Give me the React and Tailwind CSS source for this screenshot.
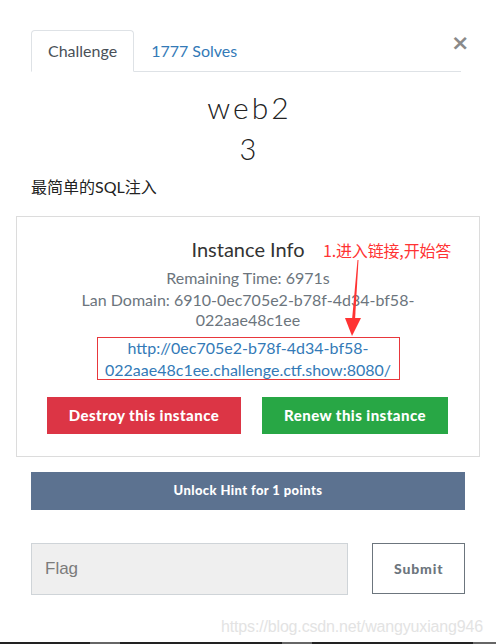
import React from "react";

export default function App() {
  const lato = { fontFamily: "Lato, 'Noto Sans CJK SC', sans-serif" };
  return (
    <div className="relative w-[496px] h-[644px] bg-white overflow-hidden flex flex-col" style={lato}>
      {/* header tabs */}
      <div className="flex items-start pt-[30px] pl-[31px] pr-[33px]">
        <div className="flex flex-1 border-b border-[#dee2e6] h-[42px]">
          <div className="h-[42px] px-[16px] flex items-center border border-[#dee2e6] border-b-white rounded-t-[4px] bg-white text-[16px] text-[#495057]">
            Challenge
          </div>
          <div className="h-[41px] px-[17px] flex items-center text-[16px] text-[#337ab7]">1777 Solves</div>
        </div>
        <div className="w-[12px] text-[22px] leading-none font-bold text-[#8a8a8a] mt-[2px] -ml-[10px]" style={{ fontFamily: "'DejaVu Sans', sans-serif" }}>
          ×
        </div>
      </div>

      {/* title */}
      <div className="flex flex-col items-center mt-[17px] text-[#222]">
        <div className="text-[30px] leading-[36px] font-light tracking-[0.1em] pl-[3px]" style={{ fontFamily: "Lato, sans-serif" }}>web2</div>
        <div className="text-[29px] leading-[36px] font-light mt-[6px]">3</div>
      </div>
      <div className="pl-[31px] mt-[9px] text-[16px] leading-[22px] text-[#222]" style={{ fontFamily: "Lato, 'Noto Sans CJK SC', sans-serif" }}>
        最简单的SQL注入
      </div>

      {/* instance box */}
      <div className="mx-[16px] mt-[18px] h-[241px] border border-[#dcdcdc] flex flex-col items-center">
        <div className="mt-[19px] text-[20px] leading-[26px] text-[#333]">Instance Info</div>
        <div className="mt-[6px] text-[16px] leading-[20px] text-[#6c757d] flex flex-col items-center">
          <span>Remaining Time: 6971s</span>
          <span className="mt-[2px]">Lan Domain: 6910-0ec705e2-b78f-4d34-bf58-</span>
          <span>022aae48c1ee</span>
        </div>
        <div className="mt-[7px] w-[303px] h-[43px] border border-[#e8373c] flex flex-col items-center justify-center text-[16px] leading-[22px] text-[#337ab7]">
          <span>http://0ec705e2-b78f-4d34-bf58-</span>
          <span>022aae48c1ee.challenge.ctf.show:8080/</span>
        </div>
        <div className="mt-[17px] flex gap-[21px] self-stretch pl-[30px]">
          <div className="w-[194px] h-[37px] bg-[#dc3545] text-white text-[15px] font-black flex items-center justify-center tracking-[0.03em]">
            Destroy this instance
          </div>
          <div className="w-[186px] h-[37px] bg-[#28a745] text-white text-[15px] font-black flex items-center justify-center tracking-[0.03em]">
            Renew this instance
          </div>
        </div>
      </div>

      {/* hint */}
      <div className="mx-[31px] mt-[15px] h-[38px] bg-[#5c7290] text-white text-[13px] font-black flex items-center justify-center tracking-[0.03em]">
        Unlock Hint for 1 points
      </div>

      {/* flag */}
      <div className="flex mx-[31px] mt-[33px] gap-[24px]">
        <div className="w-[318px] h-[52px] bg-[#efefef] border border-[#cfd4d8] flex items-center pl-[13px] text-[17px] text-[#7b7b7b]" style={{ fontFamily: "'Liberation Sans', Arial, sans-serif" }}>
          Flag
        </div>
        <div className="w-[93px] h-[51px] border border-[#6c757d] flex items-center justify-center text-[14px] font-black text-[#6c757d] tracking-[0.06em]">
          Submit
        </div>
      </div>

      {/* bottom bar */}
      <div className="mt-auto flex h-[2px]">
        <div className="w-[90px] bg-[#222]" />
        <div className="w-[30px] bg-[#666]" />
        <div className="w-[162px] bg-[#222]" />
        <div className="w-[30px] bg-[#666]" />
        <div className="w-[161px] bg-[#222]" />
        <div className="flex-1 bg-[#666]" />
      </div>

      {/* watermark */}
      <div className="absolute left-[221px] top-[615px] text-[16px] text-[#e3e3e3] tracking-[-0.01em]" style={{ fontFamily: "'Liberation Sans', Arial, sans-serif" }}>
        https://blog.csdn.net/wangyuxiang946
      </div>

      {/* annotation */}
      <div className="absolute left-[323px] top-[240px] text-[16px] leading-[20px] text-[#ff3333] tracking-[-0.01em]" style={{ fontFamily: "'Noto Sans CJK SC', sans-serif" }}>
        1.进入链接,开始答
      </div>
      <svg className="absolute left-[340px] top-[258px]" width="30" height="82" viewBox="0 0 30 82">
        <polygon points="17.5,2 18.5,2 15,62 12,62" fill="#ff3333" />
        <polygon points="5,60 21,60 12,78" fill="#ff3333" />
      </svg>
    </div>
  );
}
